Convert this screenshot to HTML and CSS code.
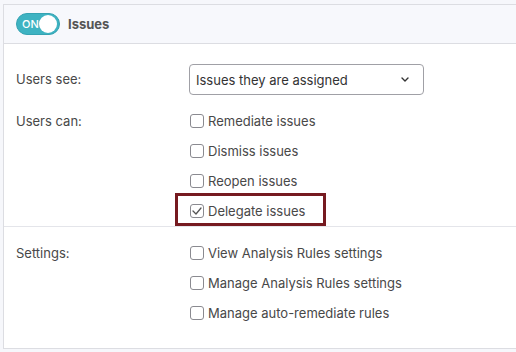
FILE: index.html
```html
<!DOCTYPE html>
<html lang="en">
<head>
  <meta charset="UTF-8">
  <meta name="viewport" content="width=device-width, initial-scale=1.0">
  <title>Issues permissions</title>
  <link rel="stylesheet" href="styles.css">
</head>
<body>

  <div class="panel">
    <div class="panel-header">
      <span class="toggle">
        <span class="toggle-text">ON</span>
        <span class="toggle-knob"></span>
      </span>
      <span class="panel-title">Issues</span>
    </div>

    <div class="section first">
      <div class="row see">
        <span class="row-label">Users see:</span>
        <div class="select">
          <span>Issues they are assigned</span>
          <svg class="chevron" width="8" height="5" viewBox="0 0 8 5"><path d="M1 1l3 3 3-3" fill="none" stroke="#333" stroke-width="1.4" stroke-linecap="round" stroke-linejoin="round"/></svg>
        </div>
      </div>

      <div class="row">
        <span class="row-label">Users can:</span>
        <div class="options">
          <label class="option"><span class="box"></span>Remediate issues</label>
          <label class="option"><span class="box"></span>Dismiss issues</label>
          <label class="option"><span class="box"></span>Reopen issues</label>
          <label class="option highlight"><span class="box checked"><svg width="10" height="8" viewBox="0 0 10 8"><path d="M1 4l3 3 5-6" fill="none" stroke="#555" stroke-width="1.3" stroke-linecap="round" stroke-linejoin="round"/></svg></span>Delegate issues</label>
        </div>
      </div>
    </div>

    <div class="section">
      <div class="row">
        <span class="row-label">Settings:</span>
        <div class="options">
          <label class="option"><span class="box"></span>View Analysis Rules settings</label>
          <label class="option"><span class="box"></span>Manage Analysis Rules settings</label>
          <label class="option"><span class="box"></span>Manage auto-remediate rules</label>
        </div>
      </div>
    </div>
  </div>

</body>
</html>
```

FILE: styles.css
```css
body {
  font-family: 'Inter', 'Liberation Sans', sans-serif;
  background-color: #f6f7fb;
  margin: 0;
  padding: 0;
  color: #484848;
  font-size: 13px;
}

.panel {
  margin: 4px 0 0 3px;
  background-color: white;
  border-top: 1px solid #dcdde2;
  border-left: 1px solid #dcdde2;
  border-bottom: 1px solid #dcdde2;
}

.panel-header {
  height: 38px;
  display: flex;
  align-items: center;
  padding-left: 12px;
  background-color: #f7f8fc;
  border-bottom: 1px solid #dcdde2;
}

.toggle {
  width: 44px;
  height: 22px;
  box-sizing: border-box;
  border-radius: 11px;
  background-color: #3eb3c2;
  border: 1px solid #35a3b2;
  display: flex;
  align-items: center;
  justify-content: space-between;
  padding: 0 2px 0 5px;
}

.toggle-text {
  color: white;
  font-size: 11px;
  font-weight: 500;
}

.toggle-knob {
  width: 18px;
  height: 18px;
  border-radius: 50%;
  background-color: white;
}

.panel-title {
  margin-left: 8px;
  font-weight: 700;
  color: #555;
}

.section {
  padding: 11px 0 20px 12px;
}

.section.first {
  padding: 20px 0 0 12px;
  border-bottom: 1px solid #e4e5ea;
}

.row {
  display: grid;
  grid-template-columns: 173px 1fr;
}

.row-label {
  line-height: 30px;
}

.row.see {
  margin-bottom: 11px;
}

.row.see .row-label {
  line-height: 31px;
}

.select {
  width: 235px;
  height: 31px;
  box-sizing: border-box;
  border: 1px solid #a0a0a6;
  border-radius: 4px;
  display: flex;
  align-items: center;
  justify-content: space-between;
  padding: 0 14px 0 6px;
  color: #333;
}

.options {
  display: flex;
  flex-direction: column;
  align-items: flex-start;
}

.option {
  height: 30px;
  display: flex;
  align-items: center;
  gap: 4px;
  position: relative;
}

.box {
  width: 14px;
  height: 14px;
  box-sizing: border-box;
  border: 1px solid #8a8a90;
  border-radius: 3px;
  margin-left: 1px;
  display: flex;
  align-items: center;
  justify-content: center;
}

.highlight::after {
  content: "";
  position: absolute;
  left: -14px;
  right: -21px;
  top: -3px;
  bottom: 0;
  border: 3px solid #761a20;
}
```
